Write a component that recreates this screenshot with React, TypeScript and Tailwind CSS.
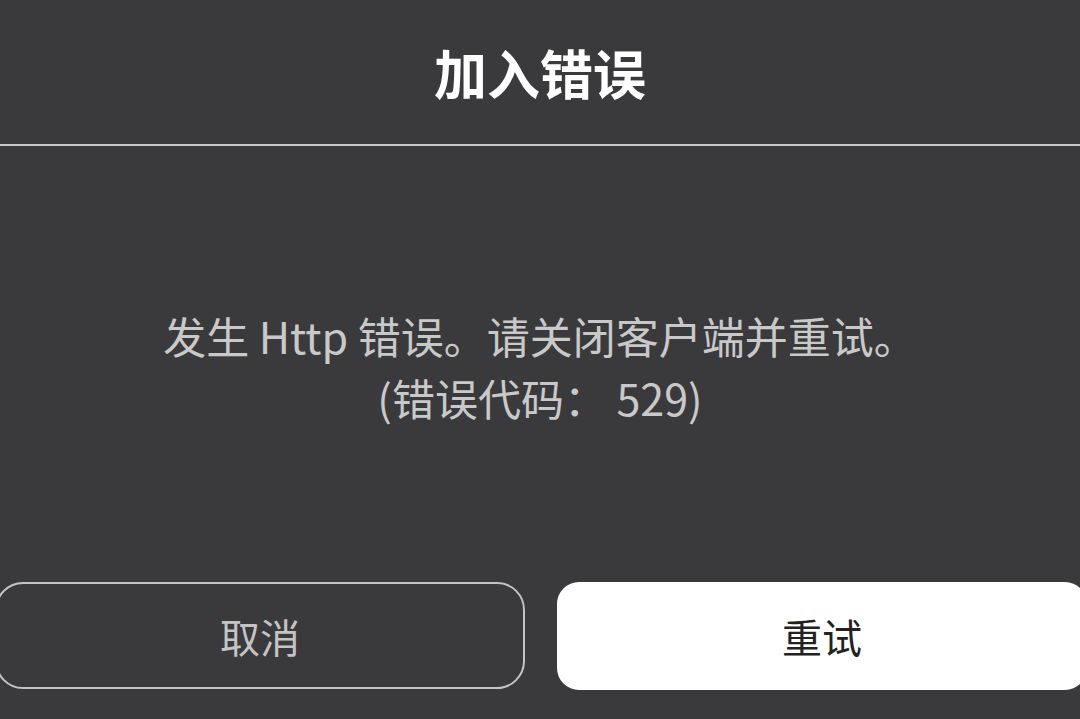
export default function App() {
  return (
    <div
      className="w-[1080px] h-[719px] overflow-hidden bg-[#3a3a3c] flex flex-col"
      style={{ fontFamily: '"Noto Sans CJK SC", "Noto Sans", sans-serif' }}
    >
      <header className="h-[144px] flex items-center justify-center">
        <h1 className="text-[53px] font-bold text-white leading-none">加入错误</h1>
      </header>
      <div className="h-[2px] bg-[#c9c9c9]" />
      <section className="h-[436px] pt-[4px] flex flex-col items-center justify-center text-[43px] leading-[62px] text-[#c9c9c9] text-center">
        <p>发生 Http 错误。请关闭客户端并重试。</p>
        <p>(错误代码： 529)</p>
      </section>
      <div className="ml-[-5px] w-[1092px] flex gap-[32px]">
        <button className="w-[530px] h-[107px] rounded-[28px] border-2 border-[#c4c4c4] text-[40px] text-[#c4c4c4]">
          取消
        </button>
        <button className="w-[530px] h-[108px] rounded-[22px] bg-white text-[40px] text-[#222]">
          重试
        </button>
      </div>
    </div>
  );
}
